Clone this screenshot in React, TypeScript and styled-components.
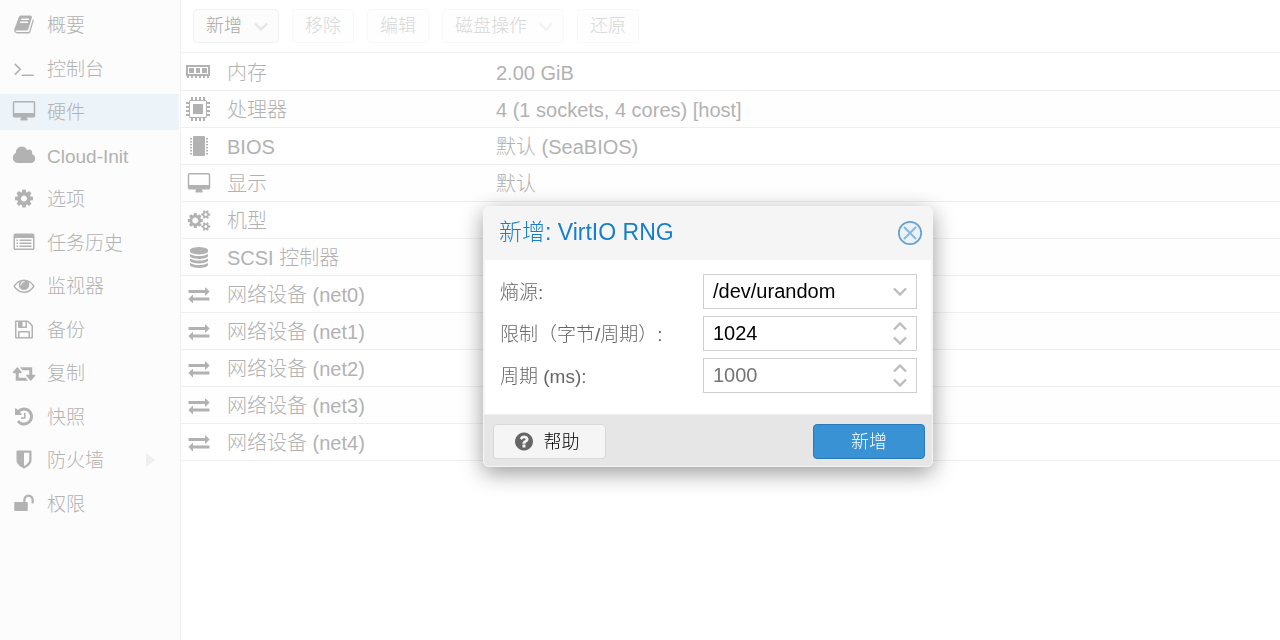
import React from "react";
import styled, { createGlobalStyle, css } from "styled-components";

const GlobalStyle = createGlobalStyle`
  *, *::before, *::after { box-sizing: border-box; }
  html, body { margin: 0; height: 100%; background: #fff; }
  #root { min-height: 100%; display: flex; }
  body, button, input, select {
    font-family: "Liberation Sans", "Noto Sans CJK SC", sans-serif;
    font-weight: 300;
  }
`;

const INK = "#b2b2b2";

/* ---------- icons ---------- */

const glyphs = {
  book: "M1703 478q40 57 18 129l-275 906q-19 64-76.5 107.5t-122.5 43.5h-923q-77 0-148.5-53.5t-99.5-131.5q-24-67-2-127 0-4 3-27t4-37q1-8-3-21.5t-3-19.5q2-11 8-21t16.5-23.5 16.5-23.5q23-38 45-91.5t30-91.5q3-10 .5-30t-.5-28q3-11 17-28t17-23q21-36 42-92t25-90q1-9-2.5-32t.5-28q4-13 22-30.5t22-22.5q19-26 42.5-84.5t27.5-96.5q1-8-3-25.5t-2-26.5q2-8 9-18t18-23 17-21q8-12 16.5-30.5t15-35 16-36 19.5-32 26.5-23.5 36-11.5 47.5 5.5l-1 3q38-9 51-9h761q74 0 114 56t18 130l-274 906q-36 119-71.5 153.5t-128.5 34.5h-869q-27 0-38 15-11 16-1 43 24 70 144 70h923q29 0 56-15.5t35-41.5l300-987q7-22 5-57 38 15 59 43zm-1064 2q-4 13 2 22.5t20 9.5h608q13 0 25.5-9.5t16.5-22.5l21-64q4-13-2-22.5t-20-9.5h-608q-13 0-25.5 9.5t-16.5 22.5zm-83 256q-4 13 2 22.5t20 9.5h608q13 0 25.5-9.5t16.5-22.5l21-64q4-13-2-22.5t-20-9.5h-608q-13 0-25.5 9.5t-16.5 22.5z",
  terminal:
    "M649 983l-466 466q-10 10-23 10t-23-10l-50-50q-10-10-10-23t10-23l393-393-393-393q-10-10-10-23t10-23l50-50q10-10 23-10t23 10l466 466q10 10 10 23t-10 23zm1079 457v64q0 14-9 23t-23 9h-960q-14 0-23-9t-9-23v-64q0-14 9-23t23-9h960q14 0 23 9t9 23z",
  desktop:
    "M1728 992v-832q0-13-9.5-22.5t-22.5-9.5h-1600q-13 0-22.5 9.5t-9.5 22.5v832q0 13 9.5 22.5t22.5 9.5h1600q13 0 22.5-9.5t9.5-22.5zm128-832v1088q0 66-47 113t-113 47h-544q0 37 16 77.5t32 71 16 43.5q0 26-19 45t-45 19h-512q-26 0-45-19t-19-45q0-14 16-44t32-70 16-78h-544q-66 0-113-47t-47-113v-1088q0-66 47-113t113-47h1600q66 0 113 47t47 113z",
  cloud:
    "M1856 1152q0 159-112.5 271.5t-271.5 112.5h-1088q-185 0-316.5-131.5t-131.5-316.5q0-132 71-241.5t187-163.5q-2-28-2-43 0-212 150-362t362-150q158 0 286.5 88t187.5 230q70-62 166-62 106 0 181 75t75 181q0 75-41 138 129 30 213 134.5t84 239.5z",
  cog: "M1152 896q0-106-75-181t-181-75-181 75-75 181 75 181 181 75 181-75 75-181zm512-109v222q0 12-8 23t-20 13l-185 28q-19 54-39 91 35 50 107 138 10 12 10 25t-9 23q-27 37-99 108t-94 71q-12 0-26-9l-138-108q-44 23-91 38-16 136-29 186-7 28-36 28h-222q-14 0-24.5-8.5t-11.5-21.5l-28-184q-49-16-90-37l-141 107q-10 9-25 9-14 0-25-11-126-114-165-168-7-10-7-23 0-12 8-23 15-21 51-66.5t54-70.5q-27-50-41-99l-183-27q-13-2-21-12.5t-8-23.5v-222q0-12 8-23t19-13l186-28q14-46 39-92-40-57-107-138-10-12-10-24 0-10 9-23 26-36 98.5-107.5t94.5-71.5q13 0 26 10l138 107q44-23 91-38 16-136 29-186 7-28 36-28h222q14 0 24.5 8.5t11.5 21.5l28 184q49 16 90 37l142-107q9-9 24-9 13 0 25 10 129 119 165 170 7 8 7 22 0 12-8 23-15 21-51 66.5t-54 70.5q26 50 41 98l183 28q13 2 21 12.5t8 23.5z",
  list: "M160 128H1632Q1792 128 1792 288V1376Q1792 1536 1632 1536H160Q0 1536 0 1376V288Q0 128 160 128zM128 544V1376Q128 1408 160 1408H1632Q1664 1408 1664 1376V544Q1664 512 1632 512H160Q128 512 128 544zM256 640h128v128h-128zM256 896h128v128h-128zM256 1152h128v128h-128zM512 640h1024v128h-1024zM512 896h1024v128h-1024zM512 1152h1024v128h-1024z",
  eye: "M1664 960q-152-236-381-353 61 104 61 225 0 185-131.5 316.5t-316.5 131.5-316.5-131.5-131.5-316.5q0-121 61-225-229 117-381 353 133 205 333.5 326.5t434.5 121.5 434.5-121.5 333.5-326.5zm-720-384q0-20-14-34t-34-14q-125 0-214.5 89.5t-89.5 214.5q0 20 14 34t34 14 34-14 14-34q0-86 61-147t147-61q20 0 34-14t14-34zm848 384q0 34-20 69-140 230-376.5 368.5t-499.5 138.5-499.5-139-376.5-368q-20-35-20-69t20-69q140-229 376.5-368t499.5-139 499.5 139 376.5 368q20 35 20 69z",
  floppy:
    "M512 1536h768v-384h-768v384zm896 0h128v-896q0-14-10-38.5t-20-34.5l-281-281q-10-10-34-20t-39-10v416q0 40-28 68t-68 28h-576q-40 0-68-28t-28-68v-416h-128v1280h128v-416q0-40 28-68t68-28h832q40 0 68 28t28 68v416zm-384-928v-320q0-13-9.5-22.5t-22.5-9.5h-192q-13 0-22.5 9.5t-9.5 22.5v320q0 13 9.5 22.5t22.5 9.5h192q13 0 22.5-9.5t9.5-22.5zm640 32v928q0 40-28 68t-68 28h-1344q-40 0-68-28t-28-68v-1344q0-40 28-68t68-28h928q40 0 88 20t76 48l280 280q28 28 48 76t20 88z",
  retweet:
    "M1216 1568q0 13-9.5 22.5t-22.5 9.5h-960q-8 0-13.5-2t-9-7-5.5-8-3-11.5-1-11.5v-600h-192q-26 0-45-19t-19-45q0-24 15-41l320-384q19-22 49-22t49 22l320 384q15 17 15 41 0 26-19 45t-45 19h-192v384h576q16 0 25 11l160 192q7 10 7 21zm640-416q0 24-15 41l-320 384q-20 23-49 23t-49-23l-320-384q-15-17-15-41 0-26 19-45t45-19h192v-384h-576q-16 0-25-12l-160-192q-7-9-7-20 0-13 9.5-22.5t22.5-9.5h960q8 0 13.5 2t9 7 5.5 8 3 11.5 1 11.5v600h192q26 0 45 19t19 45z",
  history:
    "M1664 896q0 156-61 298t-164 245-245 164-298 61q-172 0-327-72.5t-264-204.5q-7-10-6.5-22.5t8.5-20.5l137-138q10-9 25-9 16 2 23 12 73 95 179 147t225 52q104 0 198.5-40.5t163.5-109.5 109.5-163.5 40.5-198.5-40.5-198.5-109.5-163.5-163.5-109.5-198.5-40.5q-98 0-188 35.5t-160 101.5l137 138q31 30 14 69-17 40-59 40h-448q-26 0-45-19t-19-45v-448q0-42 40-59 39-17 69 14l130 129q107-101 244.5-156.5t284.5-55.5q156 0 298 61t245 164 164 245 61 298zm-640-288v448q0 14-9 23t-23 9h-320q-14 0-23-9t-9-23v-64q0-14 9-23t23-9h224v-352q0-14 9-23t23-9h64q14 0 23 9t9 23z",
  shield:
    "M1344 960v-640h-448v1137q119-63 213-137 235-184 235-360zm192-768v768q0 86-33.5 170.5t-83 150-118 127.5-126.5 103-121 77.5-89.5 49.5-42.5 20q-12 6-26 6t-26-6q-16-7-42.5-20t-89.5-49.5-121-77.5-126.5-103-118-127.5-83-150-33.5-170.5v-768q0-26 19-45t45-19h1152q26 0 45 19t19 45z",
  unlock:
    "M1728 576v256q0 26-19 45t-45 19h-64q-26 0-45-19t-19-45v-256q0-106-75-181t-181-75-181 75-75 181v192h96q40 0 68 28t28 68v576q0 40-28 68t-68 28h-960q-40 0-68-28t-28-68v-576q0-40 28-68t68-28h672v-192q0-185 131.5-316.5t316.5-131.5 316.5 131.5 131.5 316.5z",
  cogs: "M832 896q0-106-75-181t-181-75-181 75-75 181 75 181 181 75 181-75 75-181zm768 512q0-52-38-90t-90-38-90 38-38 90q0 53 37.5 90.5t90.5 37.5 90.5-37.5 37.5-90.5zm0-1024q0-52-38-90t-90-38-90 38-38 90q0 53 37.5 90.5t90.5 37.5 90.5-37.5 37.5-90.5zm-384 421v185q0 10-7 19.5t-16 10.5l-155 24q-11 35-32 76 34 48 90 115 7 11 7 20 0 12-7 19-23 30-82.5 89.5t-78.5 59.5q-11 0-21-7l-115-90q-37 19-77 31-11 108-23 155-7 24-30 24h-186q-11 0-20-7.5t-10-17.5l-23-153q-34-10-75-31l-118 89q-7 7-20 7-11 0-21-8-144-133-144-160 0-9 7-19 10-14 41-53t47-61q-23-44-35-82l-152-24q-10-1-17-9.5t-7-19.5v-185q0-10 7-19.5t16-10.5l155-24q11-35 32-76-34-48-90-115-7-11-7-20 0-12 7-20 22-30 82-89t79-59q11 0 21 7l115 90q34-18 77-32 11-108 23-154 7-24 30-24h186q11 0 20 7.5t10 17.5l23 153q34 10 75 31l118-89q8-7 20-7 11 0 21 8 144 133 144 160 0 8-7 19-12 16-42 54t-45 60q23 48 34 82l152 23q10 2 17 10.5t7 19.5zm640 533v140q0 16-149 31-12 27-30 52 51 113 51 138 0 4-4 7-122 71-124 71-8 0-46-47t-52-68q-20 2-30 2t-30-2q-14 21-52 68t-46 47q-2 0-124-71-4-3-4-7 0-25 51-138-18-25-30-52-149-15-149-31v-140q0-16 149-31 13-29 30-52-51-113-51-138 0-4 4-7 4-2 35-20t59-34 30-16q8 0 46 46.5t52 67.5q20-2 30-2t30 2q51-71 92-112l6-2q4 0 124 70 4 3 4 7 0 25-51 138 17 23 30 52 149 15 149 31zm0-1024v140q0 16-149 31-12 27-30 52 51 113 51 138 0 4-4 7-122 71-124 71-8 0-46-47t-52-68q-20 2-30 2t-30-2q-14 21-52 68t-46 47q-2 0-124-71-4-3-4-7 0-25 51-138-18-25-30-52-149-15-149-31v-140q0-16 149-31 13-29 30-52-51-113-51-138 0-4 4-7 4-2 35-20t59-34 30-16q8 0 46 46.5t52 67.5q20-2 30-2t30 2q51-71 92-112l6-2q4 0 124 70 4 3 4 7 0 25-51 138 17 23 30 52 149 15 149 31z",
  database:
    "M896 768q237 0 443-43t325-127v170q0 69-103 128t-280 93.5-385 34.5-385-34.5-280-93.5-103-128v-170q119 84 325 127t443 43zm0 768q237 0 443-43t325-127v170q0 69-103 128t-280 93.5-385 34.5-385-34.5-280-93.5-103-128v-170q119 84 325 127t443 43zm0-384q237 0 443-43t325-127v170q0 69-103 128t-280 93.5-385 34.5-385-34.5-280-93.5-103-128v-170q119 84 325 127t443 43zm0-1152q208 0 385 34.5t280 93.5 103 128v128q0 69-103 128t-280 93.5-385 34.5-385-34.5-280-93.5-103-128v-128q0-69 103-128t280-93.5 385-34.5z",
  exchange:
    "M1792 1184v192q0 13-9.5 22.5t-22.5 9.5h-1376v192q0 13-9.5 22.5t-22.5 9.5q-12 0-24-10l-319-320q-9-9-9-22 0-14 9-23l320-320q9-9 23-9 13 0 22.5 9.5t9.5 22.5v192h1376q13 0 22.5 9.5t9.5 22.5zm0-544q0 14-9 23l-320 320q-9 9-23 9-13 0-22.5-9.5t-9.5-22.5v-192h-1376q-13 0-22.5-9.5t-9.5-22.5v-192q0-13 9.5-22.5t22.5-9.5h1376v-192q0-14 9-23t23-9q12 0 24 10l319 319q9 9 9 23z",
  question:
    "M1024 1376v-192q0-14-9-23t-23-9h-192q-14 0-23 9t-9 23v192q0 14 9 23t23 9h192q14 0 23-9t9-23zm256-672q0-88-55.5-163t-138.5-116-170-41q-243 0-371 213-15 24 8 42l132 100q7 6 19 6 16 0 25-12 53-68 86-92 34-24 86-24 48 0 85.5 26t37.5 59q0 38-20 61t-68 45q-63 28-115.5 86.5t-52.5 125.5v36q0 14 9 23t23 9h192q14 0 23-9t9-23q0-19 21.5-49.5t54.5-49.5q32-18 49-28.5t46-35 44.5-48 28-60.5 12.5-81zm384 192q0 209-103 385.5t-279.5 279.5-385.5 103-385.5-103-279.5-279.5-103-385.5 103-385.5 279.5-279.5 385.5-103 385.5 103 279.5 279.5 103 385.5z",
};

type GlyphName = keyof typeof glyphs;

const IconSvg = styled.svg`
  display: block;
  flex: none;
  fill: currentColor;
`;

const Glyph = ({ name }: { name: GlyphName }) => (
  <IconSvg width="24" height="21" viewBox="-128 0 2048 1792" aria-hidden="true">
    <path fillRule={name === "list" ? "evenodd" : "nonzero"} d={glyphs[name]} />
  </IconSvg>
);

const MemoryIcon = () => (
  <IconSvg width="24" height="24" viewBox="0 0 24 24" aria-hidden="true">
    <path fillRule="evenodd" d="M0 5h24v11H0zM2 7v7h20V7z" />
    <path d="M3 8h5v5H3zM10 8h4v5h-4zM16 8h5v5h-5z" />
    <path d="M1 16h2v2H1zM5 16h2v2H5zM9 16h2v2H9zM13 16h2v2h-2zM17 16h2v2h-2zM21 16h2v2h-2z" />
  </IconSvg>
);

const CpuIcon = () => (
  <IconSvg width="24" height="24" viewBox="0 0 24 24" aria-hidden="true">
    <path fillRule="evenodd" d="M4 3h16l1 1v16l-1 1H4l-1-1V4zM4 4v16h16V4z" />
    <path d="M7 7h10v10H7z" />
    {[5, 9, 13, 17].map((p) => (
      <path
        key={p}
        d={`M${p} 0h2v3h-2zM${p} 21h2v3h-2zM0 ${p}h3v2h-3zM21 ${p}h3v2h-3z`}
      />
    ))}
  </IconSvg>
);

const ChipIcon = () => (
  <IconSvg width="24" height="21" viewBox="0 0 24 21" aria-hidden="true">
    <rect x="6" y="0" width="12" height="20" rx="1" />
    {[2, 5, 8, 11, 14, 17].map((y) => (
      <path key={y} d={`M3 ${y}h2v1.4H3zM19 ${y}h2v1.4h-2z`} />
    ))}
  </IconSvg>
);

const Chevron = ({ up }: { up?: boolean }) => (
  <svg width="14" height="9" viewBox="0 0 14 9" fill="none" stroke="currentColor" strokeWidth="2.4" aria-hidden="true">
    <path d={up ? "M1 7.5L7 1.5L13 7.5" : "M1 1.5L7 7.5L13 1.5"} />
  </svg>
);

/* ---------- sidebar ---------- */

const Sidebar = styled.nav`
  flex: none;
  width: 181px;
  border-right: 1px solid #efefef;
  background: #fcfcfc;
`;

const NavList = styled.ul`
  list-style: none;
  margin: 0;
  padding: 7px 0 0;
`;

const NavItem = styled.li`
  &:nth-child(odd) { margin-bottom: 8px; }
  &:nth-child(even) { margin-bottom: 7px; }
`;

const NavLink = styled.a<{ $active?: boolean }>`
  display: flex;
  align-items: center;
  height: 36px;
  margin-right: 1px;
  padding: 0 24px 0 12px;
  gap: 11px;
  font-size: 19px;
  line-height: 24px;
  color: ${INK};
  text-decoration: none;
  background: ${(p) => (p.$active ? "#ecf3f9" : "transparent")};

  ${IconSvg} { margin-bottom: 2px; }
`;

const NavText = styled.span`
  flex: 1;
  padding-top: 2px;
`;

const SubmenuArrow = () => (
  <svg width="9" height="14" viewBox="0 0 9 14" fill="#efefef" aria-hidden="true">
    <path d="M0 0L9 7L0 14z" />
  </svg>
);

/* ---------- hardware list ---------- */

const Page = styled.div`
  display: flex;
  flex: 1;
  min-width: 0;
`;

const Main = styled.main`
  flex: 1;
  min-width: 0;
`;

const Toolbar = styled.div`
  display: flex;
  gap: 13px;
  height: 53px;
  padding: 9px 12px;
  border-bottom: 1px solid #efefef;
`;

const ToolButton = styled.button<{ $dim?: boolean; $menu?: boolean }>`
  display: flex;
  align-items: center;
  gap: 12px;
  height: 34px;
  padding: 0 ${(p) => (p.$menu ? 10 : 12)}px 0 12px;
  border: 1px solid ${(p) => (p.$dim ? "#f8f8f8" : "#f1f1f1")};
  border-radius: 4px;
  background: ${(p) => (p.$dim ? "#fefefe" : "#fcfcfc")};
  color: ${(p) => (p.$dim ? "#d8d8d8" : "#a8a8a8")};
  font-size: 18px;
  line-height: 24px;
  white-space: nowrap;

  svg {
    flex: none;
    color: ${(p) => (p.$dim ? "#f2f2f2" : "#e6e6e6")};
  }
`;

const HardwareTable = styled.table`
  width: 100%;
  margin-top: 1px;
  border-collapse: separate;
  border-spacing: 0;
  table-layout: fixed;
  font-size: 20px;
  line-height: 24px;
  color: ${INK};
`;

const HardwareRow = styled.tr`
  &:nth-child(even) { background: #fefefe; }
`;

const cell = css`
  height: 37px;
  padding: 2px 0 0;
  border-bottom: 1px solid #efefef;
  text-align: left;
  font-weight: 300;
  white-space: nowrap;
`;

const IconCell = styled.td<{ $wide?: boolean }>`
  ${cell}
  width: 46px;
  padding: 0 0 0 ${(p) => (p.$wide ? 5 : 6)}px;
`;

const NameCell = styled.th`
  ${cell}
  width: 269px;
`;

const ValueCell = styled.td`
  ${cell}
`;

/* ---------- dialog ---------- */

const DialogLayer = styled.div`
  position: fixed;
  inset: 0;
  display: flex;
  align-items: center;
  justify-content: center;
  padding: 33px 0 0 136px;
`;

const Dialog = styled.section`
  width: 450px;
  border: 1px solid #f5f5f5;
  border-radius: 6px;
  background: #f5f5f5;
  box-shadow: 0 6px 22px rgba(0, 0, 0, 0.4);
  overflow: hidden;
`;

const DialogHeader = styled.header`
  display: flex;
  align-items: center;
  justify-content: space-between;
  height: 53px;
  padding: 0 9px 2px 15px;
`;

const DialogTitle = styled.h2`
  margin: 0;
  padding-bottom: 2px;
  font-size: 23px;
  line-height: 32px;
  font-weight: 300;
  color: #157fcc;
`;

const CloseButton = styled.button`
  width: 26px;
  height: 26px;
  padding: 0;
  border: 0;
  background: none;

  svg { display: block; }
`;

const DialogBody = styled.form`
  display: grid;
  grid-template-columns: 203px 1fr;
  gap: 7px 0;
  margin: 0 1px;
  padding: 14px 14px 21px 15px;
  background: #fff;
  align-items: center;
`;

const FieldLabel = styled.label`
  padding-top: 2px;
  font-size: 19px;
  line-height: 24px;
  color: #666;
  white-space: nowrap;
`;

const FieldBox = styled.div`
  display: flex;
  align-items: center;
  position: relative;
  height: 35px;
  border: 1px solid #cfcfcf;
  background: #fff;
`;

const fieldText = css`
  flex: 1;
  width: 100%;
  min-width: 0;
  height: 33px;
  padding: 0 34px 0 9px;
  border: 0;
  outline: 0;
  background: transparent;
  appearance: none;
  font-size: 20px;
  line-height: 24px;
  color: #000;
`;

const SelectControl = styled.select`
  ${fieldText}
  padding-bottom: 2px;
`;

const NumberControl = styled.input`
  ${fieldText}
  appearance: textfield;

  &::-webkit-inner-spin-button { appearance: none; }
  &::placeholder { color: #757575; }
`;

const Trigger = styled.div`
  position: absolute;
  right: 9px;
  top: 0;
  bottom: 0;
  display: flex;
  flex-direction: column;
  align-items: center;
  justify-content: center;
  gap: 5px;
  color: #bdbdbd;
  pointer-events: none;

  svg { display: block; }
`;

const SpinButton = styled.button`
  display: block;
  padding: 0;
  border: 0;
  background: none;
  color: inherit;
  pointer-events: auto;
`;

const DialogFooter = styled.footer`
  display: flex;
  justify-content: space-between;
  padding: 9px 7px 7px 9px;
  border-top: 1px solid #f0f0f0;
  background: #e6e6e6;
`;

const FooterButton = styled.button<{ $primary?: boolean }>`
  display: flex;
  align-items: center;
  justify-content: center;
  gap: 8px;
  width: ${(p) => (p.$primary ? 112 : 113)}px;
  height: 35px;
  padding: 0 ${(p) => (p.$primary ? 0 : 8)}px 0 0;
  border: 1px solid ${(p) => (p.$primary ? "#2a7ab8" : "#d8d8d8")};
  border-radius: 4px;
  background: ${(p) => (p.$primary ? "#3892d4" : "#f5f5f5")};
  color: ${(p) => (p.$primary ? "#fff" : "#000")};
  font-size: 18px;
  line-height: 24px;

  svg { color: #666; }
`;

/* ---------- data ---------- */

const navItems: { icon: GlyphName; label: string; active?: boolean; submenu?: boolean }[] = [
  { icon: "book", label: "概要" },
  { icon: "terminal", label: "控制台" },
  { icon: "desktop", label: "硬件", active: true },
  { icon: "cloud", label: "Cloud-Init" },
  { icon: "cog", label: "选项" },
  { icon: "list", label: "任务历史" },
  { icon: "eye", label: "监视器" },
  { icon: "floppy", label: "备份" },
  { icon: "retweet", label: "复制" },
  { icon: "history", label: "快照" },
  { icon: "shield", label: "防火墙", submenu: true },
  { icon: "unlock", label: "权限" },
];

const tools = [
  { label: "新增", menu: true, enabled: true },
  { label: "移除" },
  { label: "编辑" },
  { label: "磁盘操作", menu: true },
  { label: "还原" },
];

const hardware: { icon: React.ReactNode; wide?: boolean; name: string; value?: string }[] = [
  { icon: <MemoryIcon />, wide: true, name: "内存", value: "2.00 GiB" },
  { icon: <CpuIcon />, wide: true, name: "处理器", value: "4 (1 sockets, 4 cores) [host]" },
  { icon: <ChipIcon />, name: "BIOS", value: "默认 (SeaBIOS)" },
  { icon: <Glyph name="desktop" />, name: "显示", value: "默认" },
  { icon: <Glyph name="cogs" />, name: "机型" },
  { icon: <Glyph name="database" />, name: "SCSI 控制器" },
  ...[0, 1, 2, 3, 4].map((n) => ({
    icon: <Glyph name="exchange" />,
    name: `网络设备 (net${n})`,
  })),
];

const Spinner = ({ label }: { label: string }) => (
  <Trigger>
    <SpinButton type="button" aria-label={`${label} +`}>
      <Chevron up />
    </SpinButton>
    <SpinButton type="button" aria-label={`${label} -`}>
      <Chevron />
    </SpinButton>
  </Trigger>
);

export default function App() {
  return (
    <>
      <GlobalStyle />
      <Page>
        <Sidebar>
          <NavList>
            {navItems.map((item) => (
              <NavItem key={item.label}>
                <NavLink href="#" $active={item.active}>
                  <Glyph name={item.icon} />
                  <NavText>{item.label}</NavText>
                  {item.submenu && <SubmenuArrow />}
                </NavLink>
              </NavItem>
            ))}
          </NavList>
        </Sidebar>
        <Main>
          <Toolbar>
            {tools.map((tool) => (
              <ToolButton
                key={tool.label}
                type="button"
                disabled={!tool.enabled}
                $dim={!tool.enabled}
                $menu={tool.menu}
              >
                {tool.label}
                {tool.menu && <Chevron />}
              </ToolButton>
            ))}
          </Toolbar>
          <HardwareTable>
            <tbody>
              {hardware.map((item) => (
                <HardwareRow key={item.name}>
                  <IconCell $wide={item.wide}>{item.icon}</IconCell>
                  <NameCell scope="row">{item.name}</NameCell>
                  <ValueCell>{item.value}</ValueCell>
                </HardwareRow>
              ))}
            </tbody>
          </HardwareTable>
        </Main>
      </Page>

      <DialogLayer>
        <Dialog role="dialog" aria-labelledby="dialog-title">
          <DialogHeader>
            <DialogTitle id="dialog-title">新增: VirtIO RNG</DialogTitle>
            <CloseButton type="button" aria-label="关闭">
              <svg width="26" height="26" viewBox="0 0 26 26" fill="none" aria-hidden="true">
                <circle cx="13" cy="13" r="11.2" fill="#eaf2f9" stroke="#68a1cd" strokeWidth="1.7" />
                <path d="M7 7L19 19M19 7L7 19" stroke="#8db7d9" strokeWidth="2" />
              </svg>
            </CloseButton>
          </DialogHeader>
          <DialogBody id="rng-form">
            <FieldLabel htmlFor="source">熵源:</FieldLabel>
            <FieldBox>
              <SelectControl id="source" defaultValue="/dev/urandom">
                <option>/dev/urandom</option>
              </SelectControl>
              <Trigger>
                <Chevron />
              </Trigger>
            </FieldBox>
            <FieldLabel htmlFor="limit">限制（字节/周期）:</FieldLabel>
            <FieldBox>
              <NumberControl id="limit" type="number" defaultValue={1024} />
              <Spinner label="限制" />
            </FieldBox>
            <FieldLabel htmlFor="period">周期 (ms):</FieldLabel>
            <FieldBox>
              <NumberControl id="period" type="number" placeholder="1000" />
              <Spinner label="周期" />
            </FieldBox>
          </DialogBody>
          <DialogFooter>
            <FooterButton type="button">
              <Glyph name="question" />
              帮助
            </FooterButton>
            <FooterButton type="submit" form="rng-form" $primary>
              新增
            </FooterButton>
          </DialogFooter>
        </Dialog>
      </DialogLayer>
    </>
  );
}
